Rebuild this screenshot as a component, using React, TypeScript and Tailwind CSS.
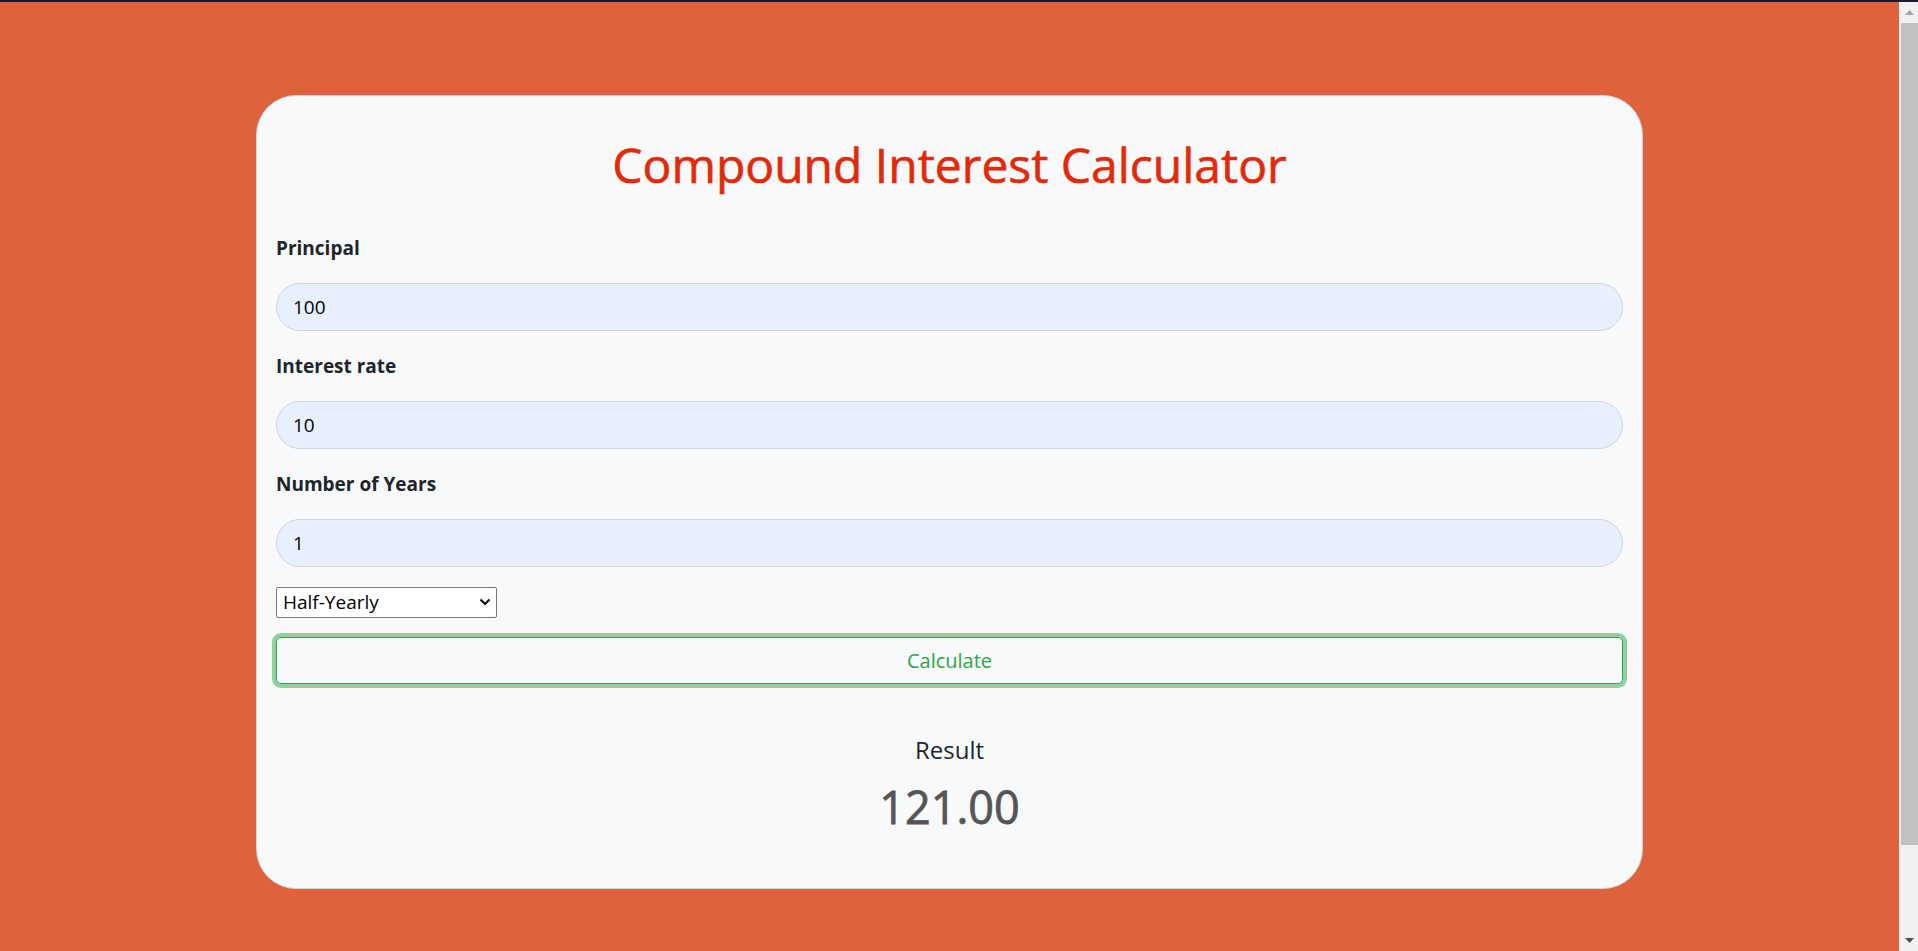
import { useState } from "react";

const Field = ({ label, value }: { label: string; value: string }) => {
  return (
    <div>
      <label className="mb-5 block text-[19px] font-bold leading-[30px] text-[#212529]">
        {label}
      </label>
      <input
        type="text"
        defaultValue={value}
        className="mb-5 block h-[48px] w-full rounded-full border border-[#ced4da] bg-[#e8f0fe] px-4 text-[19px] text-black outline-none"
      />
    </div>
  );
};

const Scrollbar = () => {
  return (
    <div className="flex w-[19px] flex-none flex-col bg-[#f1f1f1] pl-[2px]">
      <div className="flex h-[21px] items-center justify-center">
        <svg width="9" height="5" viewBox="0 0 9 5">
          <path d="M0 5 L4.5 0 L9 5 Z" fill="#a3a3a3" />
        </svg>
      </div>
      <div className="h-[822px] bg-[#c1c1c1]" />
      <div className="flex-1" />
      <div className="flex h-[21px] items-center justify-center">
        <svg width="9" height="5" viewBox="0 0 9 5">
          <path d="M0 0 L9 0 L4.5 5 Z" fill="#505050" />
        </svg>
      </div>
    </div>
  );
};

export default function App() {
  const [period, setPeriod] = useState("2");

  return (
    <div className="flex h-[951px] flex-col overflow-hidden font-['Open_Sans',sans-serif]">
      <div className="h-[2px] flex-none bg-[#1b1a2c]" />
      <div className="flex min-h-0 flex-1">
        <main className="flex-1 bg-[#e0623c] pt-[93px]">
          <div className="mx-auto w-[1387px] rounded-[40px] border border-[#d2d4d7] bg-[#f8f9fa] px-[19px] pb-[52px] pt-[40px]">
            <h1 className="mb-10 text-center text-[48px] leading-[57px] text-[#e3290a] [-webkit-text-stroke:0.6px_#e3290a]">
              Compound Interest Calculator
            </h1>

            <Field label="Principal" value="100" />
            <Field label="Interest rate" value="10" />
            <Field label="Number of Years" value="1" />

            <div className="relative mb-[19px] w-[221px]">
              <select
                value={period}
                onChange={(e) => setPeriod(e.target.value)}
                className="block h-[31px] w-full appearance-none rounded-[2px] border border-[#767676] bg-white pl-[6px] text-[19px] leading-[29px] text-black outline-none"
              >
                <option value="1">Yearly</option>
                <option value="2">Half-Yearly</option>
                <option value="4">Quarterly</option>
                <option value="12">Monthly</option>
              </select>
              <svg
                className="pointer-events-none absolute right-[6px] top-[11px]"
                width="12"
                height="8"
                viewBox="0 0 12 8"
              >
                <path d="M1.5 1.5 L6 6 L10.5 1.5" fill="none" stroke="#111" strokeWidth="2.2" />
              </svg>
            </div>

            <button className="block h-[47px] w-full rounded-[5px] border border-[#28a745] text-[20px] text-[#28a745] shadow-[0_0_0_4px_rgba(40,167,69,0.5)]">
              Calculate
            </button>

            <div className="mt-[48px] text-center">
              <h3 className="text-[24px] leading-[36px] text-[#212529]">Result</h3>
              <p className="mt-[10px] text-[45px] leading-[58px] text-[#555] [-webkit-text-stroke:0.8px_#555]">
                121.00
              </p>
            </div>
          </div>
        </main>
        <Scrollbar />
      </div>
    </div>
  );
}
